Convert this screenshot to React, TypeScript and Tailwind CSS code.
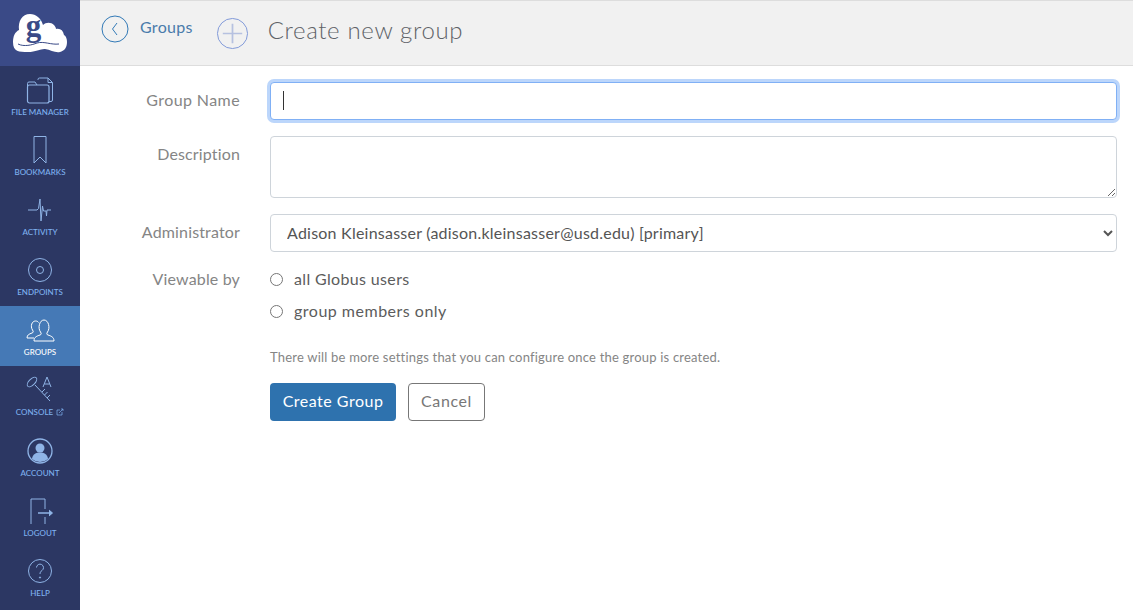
const font = "font-['Lato','Noto_Sans',sans-serif]";

function NavIcon({ name }: { name: string }) {
  const cls = "w-[32px] h-[32px] text-[#8fb4e6]";
  const common = { fill: "none", stroke: "currentColor", strokeWidth: 1, viewBox: "0 0 32 32", className: cls };
  switch (name) {
    case "file":
      return (
        <svg {...common}>
          <path d="M14 6V5.500A1.500 1.500 0 0 1 15.500 4H24l4.500 4.500V26a1.500 1.500 0 0 1-1.500 1.500H25" />
          <path d="M24 4v4.500h4.500" />
          <rect x="3.500" y="11" width="21.500" height="18" rx="2" strokeWidth="1.200" />
          <path d="M3.500 13V9.500A1.500 1.500 0 0 1 5 8h6l2 3" />
        </svg>
      );
    case "bookmark":
      return (
        <svg {...common}>
          <path d="M10 2.500h12V29l-6-6-6 6z" />
        </svg>
      );
    case "activity":
      return (
        <svg {...common}>
          <path d="M4 16h9l1.500-1.500L16 5l1 22 1.500-15 1 5h2.500l.5 5 .5-6h4" />
        </svg>
      );
    case "endpoint":
      return (
        <svg {...common}>
          <circle cx="16" cy="16" r="11.500" />
          <circle cx="16" cy="16" r="3.500" />
        </svg>
      );
    case "groups":
      return (
        <svg {...common} className="w-[32px] h-[32px] text-white">
          <path d="M3 24c0-3 2-4 5-5 1.500-.5 1.500-1.500.5-3-2.500-4-.5-9 3-9 1.500 0 2.500.6 3 1.500" />
          <path d="M3 24h7" />
          <path d="M10 27c0-4 3-5 6-6 1.500-.5 1.500-1.500.5-3-3-4-1-12 3.500-12s6.500 8 3.500 12c-1 1.500-1 2.500.5 3 3 1 6 2 6 6z" />
        </svg>
      );
    case "console":
      return (
        <svg {...common}>
          <ellipse cx="8" cy="8" rx="3" ry="6" transform="rotate(45 8 8)" />
          <path d="M11 11l15 16M18 18l3-3M20.500 21l3-3M23 24l3-3" />
          <path d="M19 13l4-10 4 10M20.400 10h5.200" />
        </svg>
      );
    case "account":
      return (
        <svg {...common} strokeWidth={1.300}>
          <circle cx="16" cy="16" r="12" />
          <circle cx="16" cy="13" r="4.500" fill="currentColor" stroke="none" />
          <path d="M8 24c.5-5 4-6.500 8-6.500s7.500 1.500 8 6.500a12 12 0 0 1-16 0z" fill="currentColor" stroke="none" />
        </svg>
      );
    case "logout":
      return (
        <svg {...common}>
          <path d="M7 29V4h14v10M21 22v7" />
          <path d="M14 18h14" strokeWidth="1.500" />
          <path d="M25 15l3.500 3-3.500 3" fill="currentColor" />
        </svg>
      );
    default:
      return (
        <svg {...common}>
          <circle cx="16" cy="16" r="11.500" />
          <path d="M12.500 12.500a3.500 3.500 0 1 1 5.500 3c-1.300 1-2 1.700-2 3.500" />
          <circle cx="16" cy="22.500" r=".6" fill="currentColor" />
        </svg>
      );
  }
}

const navItems = [
  { name: "file", label: "FILE MANAGER" },
  { name: "bookmark", label: "BOOKMARKS" },
  { name: "activity", label: "ACTIVITY" },
  { name: "endpoint", label: "ENDPOINTS" },
  { name: "groups", label: "GROUPS", active: true },
  { name: "console", label: "CONSOLE", external: true },
  { name: "account", label: "ACCOUNT" },
  { name: "logout", label: "LOGOUT" },
  { name: "help", label: "HELP" },
];

function Sidebar() {
  return (
    <div className="w-[80px] shrink-0 bg-[#2c3763] flex flex-col">
      <div className="h-[66px] bg-[#3a4a87] flex items-center justify-center">
        <svg viewBox="0 -8 54 55" className="w-[54px] h-[55px]">
          <path
            d="M0 28C0 22 2 18 6 16 5 7 9 0 17 0c6 0 11 4 13 11 3-3 8-3 11 0 1 1 2 3 2 4 4-1 7 1 8 6 2 1 3 4 3 7 0 6-3 9-7 10-5 1-9-2-15-3-4-.5-9 3-17 3-9 0-15 0-15-10z"
            fill="#fff"
          />
          <path d="M5 30c6 3 14 1 19-1 7-2 14 2 22 1" fill="none" stroke="#3a4a87" strokeWidth="1" />
          <text x="20.500" y="22" textAnchor="middle" fontFamily="Liberation Serif, serif" fontWeight="700" fontSize="31" fill="#3a4a87">
            g
          </text>
        </svg>
      </div>
      {navItems.map((item) => (
        <div
          key={item.label}
          className={`${item.external ? "h-[61px]" : "h-[60px]"} flex flex-col items-center pt-[8px] ${item.active ? "bg-[#4579b6] text-white" : "text-[#7fb2f0]"}`}
        >
          <NavIcon name={item.name} />
          <div className={`${font} text-[8px] leading-[12px] font-medium flex items-center gap-[3px] whitespace-nowrap`}>
            {item.label}
            {item.external && (
              <svg viewBox="0 0 8 8" className="w-[8px] h-[8px]" fill="none" stroke="currentColor" strokeWidth="0.700">
                <path d="M1 2h3M1 2v5h5V4M3 5l4-4M5 1h2v2" />
              </svg>
            )}
          </div>
        </div>
      ))}
    </div>
  );
}

function FormRow({ label, children, className, labelClass }: { label: string; children: React.ReactNode; className?: string; labelClass?: string }) {
  return (
    <div className={`flex ${className ?? ""}`}>
      <div className={`w-[160px] shrink-0 text-right text-[16px] leading-[36px] text-[#858585] ${labelClass ?? "tracking-[0.15px]"}`}>{label}</div>
      <div className="ml-[30px] flex-1 min-w-0">{children}</div>
    </div>
  );
}

export default function App() {
  return (
    <div className={`${font} h-[610px] w-[1133px] flex overflow-hidden bg-white`}>
      <Sidebar />
      <div className="flex-1 min-w-0">
        <div className="h-[66px] bg-[#f1f1f1] border-y border-[#dddddd] flex items-start pl-[21px]">
          <div className="flex items-center mt-[14px]">
            <svg viewBox="0 0 28 28" className="w-[28px] h-[28px] text-[#337ab7]" fill="none" stroke="currentColor" strokeWidth="1">
              <circle cx="14" cy="14" r="13" />
              <path d="M16 8l-4.500 6 4.500 6" />
            </svg>
            <span className="ml-[11px] text-[16px] leading-[24px] tracking-[0.3px] text-[#4a7bab] -mt-[4px]">Groups</span>
          </div>
          <svg viewBox="0 0 34 34" className="ml-[23px] mt-[16px] w-[33px] h-[33px]" fill="none" strokeWidth="1">
            <circle cx="17" cy="17" r="15.500" stroke="#7f98d8" />
            <path d="M17 7v20M7 17h20" stroke="#b6c1e0" strokeWidth="1.800" />
          </svg>
          <div className="ml-[19px] mt-[14px] text-[24px] leading-[30px] font-light tracking-[0.65px] text-[#5f6368]">Create new group</div>
        </div>

        <div className="pt-[16px] pr-[16px] flex flex-col">
          <FormRow label="Group Name" labelClass="tracking-[0.4px]">
            <div className="relative">
              <input
                type="text"
                className="block w-full h-[38px] rounded-[4px] border border-[#80b0f5] bg-white outline-none ring-[3px] ring-[#bcd6fb]"
              />
              <div className="absolute left-[13px] top-[9px] w-px h-[19px] bg-[#333]" />
            </div>
          </FormRow>
          <FormRow label="Description" className="mt-[16px]">
            <textarea className="block w-full h-[62px] rounded-[4px] border border-[#ced4da] bg-white outline-none" />
          </FormRow>
          <FormRow label="Administrator" className="mt-[16px]">
            <select className="block w-full h-[38px] rounded-[4px] border border-[#ced4da] bg-white pl-[12px] pb-[2px] text-[16px] tracking-[0.23px] text-[#555] outline-none">
              <option>Adison Kleinsasser (adison.kleinsasser@usd.edu) [primary]</option>
            </select>
          </FormRow>
          <div className="flex mt-[8px]">
            <div className="w-[160px] shrink-0 text-right text-[16px] leading-[38px] tracking-[0.15px] text-[#858585]">Viewable by</div>
            <div className="ml-[30px] flex flex-col">
              <label className="flex items-center h-[38px] text-[16px] tracking-[0.35px] text-[#5c5c5c]">
                <input type="radio" name="viewable" className="w-[13px] h-[13px] m-0" />
                <span className="ml-[11px]">all Globus users</span>
              </label>
              <label className="flex items-center h-[26px] text-[16px] tracking-[0.5px] text-[#5c5c5c]">
                <input type="radio" name="viewable" className="w-[13px] h-[13px] m-0" />
                <span className="ml-[11px]">group members only</span>
              </label>
              <p className="mt-[24px] text-[13px] leading-[18px] tracking-[0.2px] text-[#858585]">
                There will be more settings that you can configure once the group is created.
              </p>
              <div className="mt-[17px] flex gap-[12px]">
                <button className="h-[38px] w-[126px] rounded-[4px] bg-[#2e72ae] pb-[2px] text-[16px] tracking-[0.5px] text-white">Create Group</button>
                <button className="h-[38px] w-[77px] rounded-[4px] border border-[#777] bg-white pb-[2px] text-[16px] tracking-[0.6px] text-[#777]">Cancel</button>
              </div>
            </div>
          </div>
        </div>
      </div>
    </div>
  );
}
